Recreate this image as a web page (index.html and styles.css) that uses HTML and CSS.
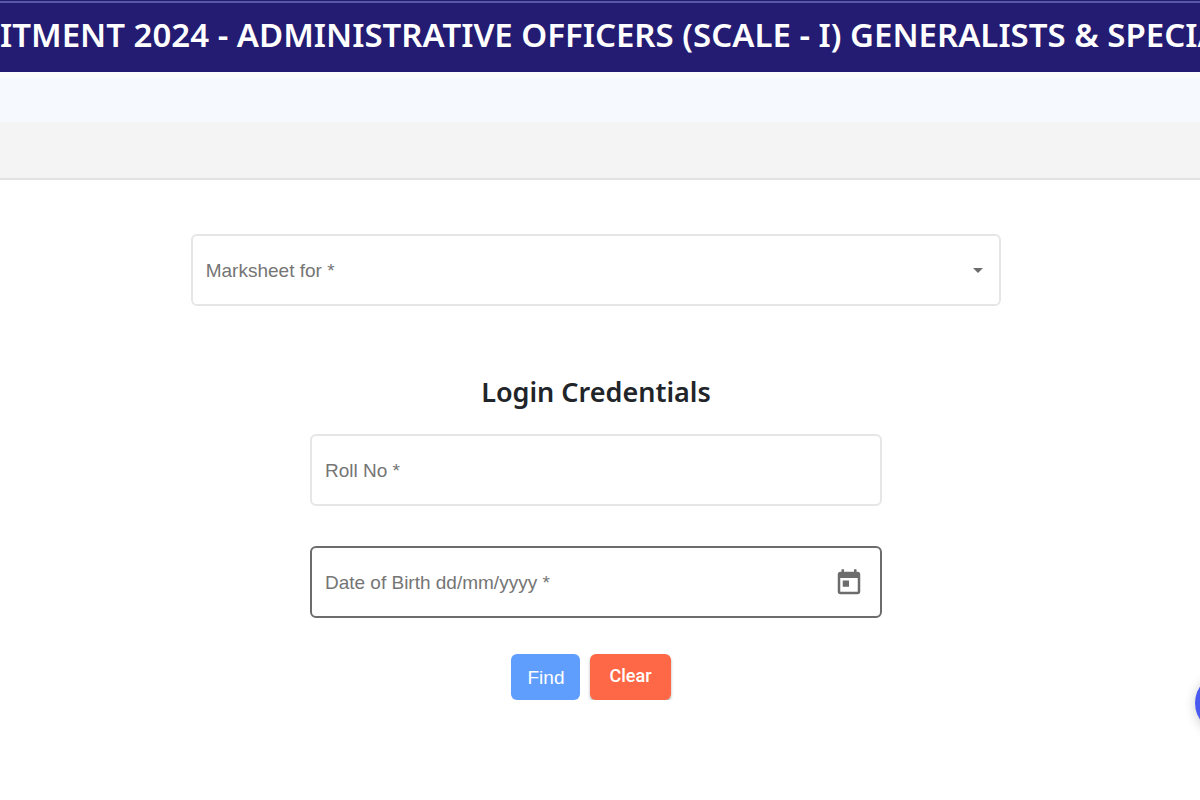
FILE: index.html
```
<!DOCTYPE html>
<html lang="en">

<head>
    <meta charset="UTF-8" />
    <meta name="viewport" content="width=device-width, initial-scale=1" />
    <title>Marksheet</title>
    <link rel="stylesheet" href="styles.css">
</head>

<body>
    <header class="banner">
        <h1>ITMENT 2024 - ADMINISTRATIVE OFFICERS (SCALE - I) GENERALISTS &amp; SPECIA</h1>
    </header>
    <div class="strip"></div>
    <div class="toolbar"></div>

    <main>
        <form class="login">
            <div class="field wide">
                <select id="marksheet" aria-label="Marksheet for" required>
                    <option value="">Marksheet for *</option>
                </select>
                <svg class="arrow" viewBox="0 0 10 5" aria-hidden="true"><path d="M0 0h10L5 5z" /></svg>
            </div>

            <h2>Login Credentials</h2>

            <div class="field">
                <input type="text" id="roll" placeholder="Roll No *" aria-label="Roll No" required>
            </div>
            <div class="field active">
                <input type="text" id="dob" placeholder="Date of Birth dd/mm/yyyy *" aria-label="Date of Birth" required>
                <button type="button" class="picker" aria-label="Open calendar">
                    <svg viewBox="0 0 24 24" aria-hidden="true"><path d="M19 3h-1V1h-2v2H8V1H6v2H5c-1.11 0-1.99.9-1.99 2L3 19c0 1.1.89 2 2 2h14c1.1 0 2-.9 2-2V5c0-1.1-.9-2-2-2zm0 16H5V8h14v11zM7 10h5v5H7z" /></svg>
                </button>
            </div>

            <div class="actions">
                <button type="submit" class="btn find">Find</button>
                <button type="reset" class="btn clear">Clear</button>
            </div>
        </form>
    </main>

    <button type="button" class="fab" aria-label="Help"></button>
</body>

</html>
```

FILE: styles.css
```
:root {
    --navy: #231c72;
    --line: #e6e6e6;
    --label: #757575;
    --radius: 6px
}

* {
    box-sizing: border-box
}

body {
    margin: 0;
    font-family: "Liberation Sans", Arial, sans-serif;
    background: #fff;
    color: #212529;
    overflow-x: hidden
}

.banner {
    display: flex;
    align-items: center;
    height: 72px;
    padding-bottom: 2px;
    overflow: hidden;
    background: linear-gradient(var(--navy) 1px, #5a56a8 1px, #5a56a8 3px, var(--navy) 3px)
}

h1 {
    flex: none;
    margin: 0;
    font: 600 33px/48px "Noto Sans", "Open Sans", sans-serif;
    color: #fff;
    white-space: nowrap
}

.strip {
    height: 50px;
    border-top: 6px solid #fcfcfc;
    background: #f6f9fd
}

.toolbar {
    height: 58px;
    background: #f4f4f4;
    border-bottom: 2px solid #e2e2e2
}

main {
    padding: 54px 8px 0 0
}

.login {
    display: flex;
    flex-direction: column;
    align-items: center
}

.field {
    display: flex;
    align-items: center;
    width: 48%;
    height: 72px;
    margin-bottom: 40px;
    padding: 2px 14px 0 13px;
    border: 2px solid var(--line);
    border-radius: var(--radius);
    background: #fff
}

.field.wide {
    width: 68%;
    padding-top: 0
}

.field.active {
    margin-bottom: 36px;
    border-color: #6c6c6c
}

select,
input {
    flex: 1;
    min-width: 0;
    height: 100%;
    margin: 0;
    padding: 0;
    border: none;
    outline: none;
    background: none;
    appearance: none;
    font: 19px "Liberation Sans", Arial, sans-serif;
    color: var(--label)
}

input::placeholder {
    color: var(--label);
    opacity: 1
}

.arrow {
    width: 10px;
    height: 5px;
    margin-right: 2px;
    fill: #6c6c6c
}

h2 {
    margin: 26px 0 22px;
    font: 600 27px/40px "Noto Sans", "Open Sans", sans-serif
}

.picker {
    display: flex;
    padding: 2px;
    border: none;
    background: none;
    cursor: pointer
}

.picker svg {
    width: 30px;
    height: 30px;
    fill: #6c6c6c
}

.actions {
    display: flex;
    align-items: center
}

.btn {
    height: 46px;
    margin-right: 10px;
    padding: 2px 16px 0;
    border: none;
    border-radius: var(--radius);
    font: 19px "Liberation Sans", Arial, sans-serif;
    color: #fff;
    cursor: pointer
}

.find {
    background: #609efe
}

.clear {
    padding: 0 19px 4px;
    background: #ff6846;
    font: 500 18px Roboto, sans-serif;
    box-shadow: 0 2px 3px rgba(0, 0, 0, .3)
}

.fab {
    position: fixed;
    right: -55px;
    bottom: 67px;
    width: 60px;
    height: 60px;
    border: none;
    border-radius: 50%;
    background: #4a5af0;
    box-shadow: 0 2px 12px rgba(0, 0, 0, .2)
}
```
